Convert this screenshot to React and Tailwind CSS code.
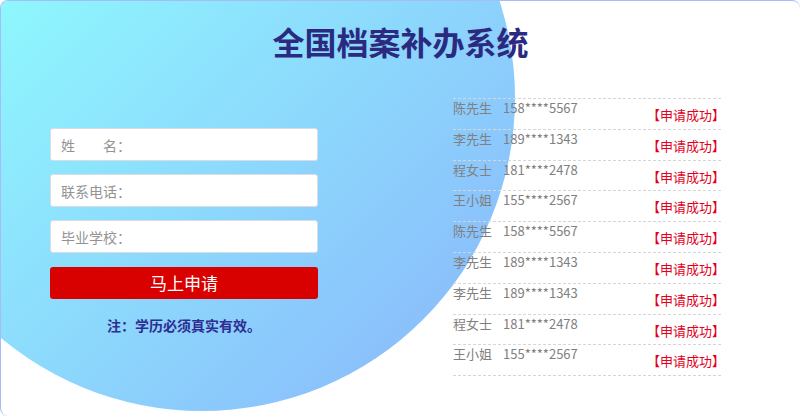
const records = [
  { name: "陈先生", phone: "158****5567" },
  { name: "李先生", phone: "189****1343" },
  { name: "程女士", phone: "181****2478" },
  { name: "王小姐", phone: "155****2567" },
  { name: "陈先生", phone: "158****5567" },
  { name: "李先生", phone: "189****1343" },
  { name: "李先生", phone: "189****1343" },
  { name: "程女士", phone: "181****2478" },
  { name: "王小姐", phone: "155****2567" }
];

const fields = ["姓　　名：", "联系电话：", "毕业学校："];

export default function App() {
  return (
    <div className="relative h-[416px] w-[800px] overflow-hidden rounded-lg border-l border-t border-[#a7bcf6] bg-white font-['Noto_Sans_CJK_SC','Noto_Sans',sans-serif]">
      {/* decorative gradient disc behind the form */}
      <div className="absolute left-[-112px] top-[-216px] h-[626px] w-[626px] rounded-full bg-linear-to-br from-[#8ef8fd] from-25% to-[#8abcfb] to-90%" />

      <div className="relative">
        <h1 className="pt-4 text-center text-[32px] font-bold leading-[48px] text-[#2b2a80]">全国档案补办系统</h1>

        <div className="flex items-start pl-[49px]">
          <div className="mt-[63px] w-[268px]">
            <div className="flex flex-col gap-[13px]">
              {fields.map((label) => (
                <input
                  key={label}
                  placeholder={label}
                  className="h-[33px] w-full rounded-[3px] border border-[#d9dde3] bg-white px-[10px] text-[14px] text-[#555] outline-none placeholder:text-[#939393]"
                />
              ))}
            </div>
            <button className="mt-[14px] h-[32px] w-full rounded-[3px] bg-[#d90000] text-[17px] text-white">马上申请</button>
            <p className="mt-[16px] text-center text-[14px] font-bold leading-5 text-[#2e2d92]">注：学历必须真实有效。</p>
          </div>

          <div className="ml-[135px] mt-[33px] w-[268px] border-b border-dashed border-[#d6d6d6]">
            {records.map((r, i) => (
              <div key={i} className="flex h-[30.8px] items-start border-t border-dashed border-[#d6d6d6] text-[13px] leading-[18px] text-[#808080]">
                <span className="w-[50px]">{r.name}</span>
                <span>{r.phone}</span>
                <span className="ml-auto mr-[-4px] mt-[7px] text-[#e3001b]">【申请成功】</span>
              </div>
            ))}
          </div>
        </div>
      </div>
    </div>
  );
}
